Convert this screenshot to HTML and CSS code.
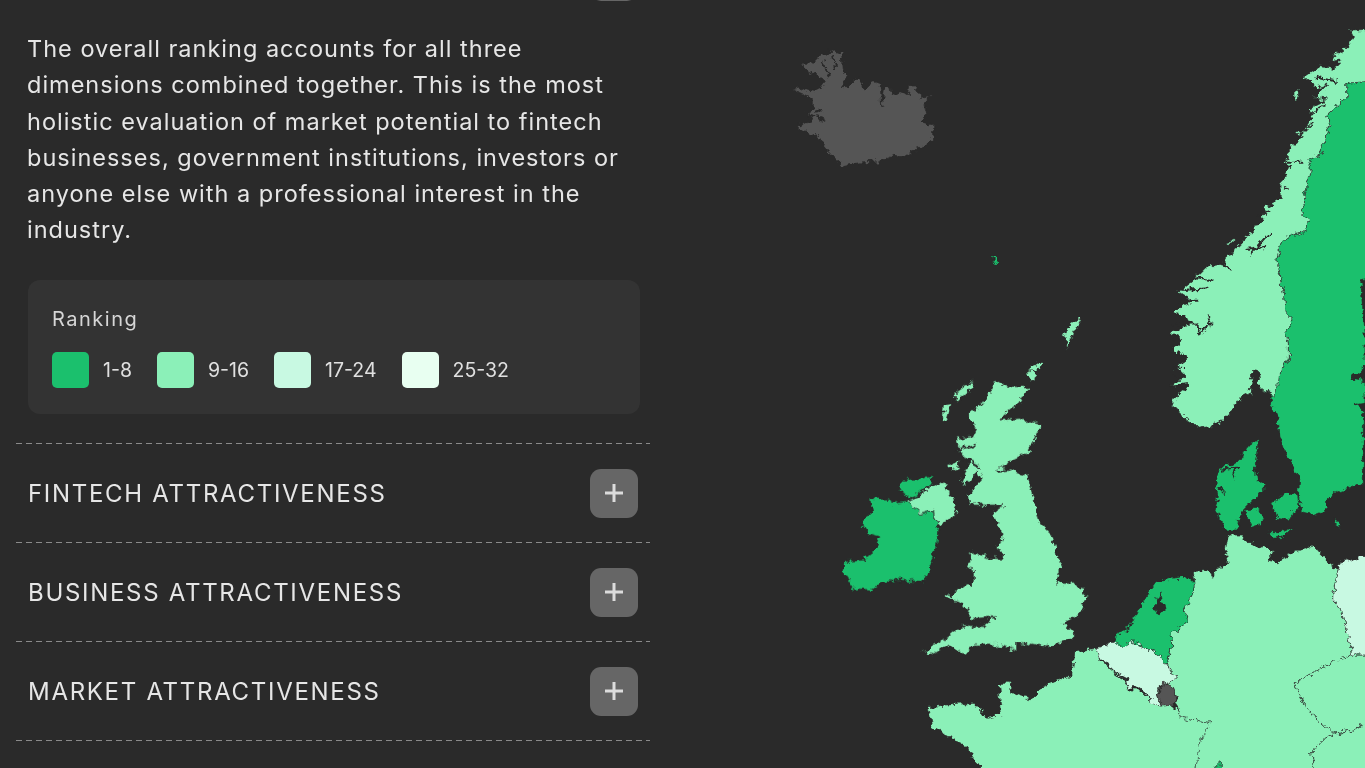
FILE: index.html
```html
<!DOCTYPE html>
<html lang="en">
<head>
<meta charset="utf-8">
<title>Fintech market ranking</title>
<link rel="stylesheet" href="styles.css">
</head>
<body>
<main class="page">
  <aside class="panel">
    <div class="clipped-row"><button class="toggle" type="button" aria-label="Collapse"></button></div>
    <p class="intro">The overall ranking accounts for all three dimensions combined together. This is the most holistic evaluation of market potential to fintech businesses, government institutions, investors or anyone else with a professional interest in the industry.</p>
    <div class="legend">
      <div class="legend-title">Ranking</div>
      <ul class="legend-items">
        <li class="legend-item"><span class="swatch rank-1"></span>1-8</li>
        <li class="legend-item"><span class="swatch rank-2"></span>9-16</li>
        <li class="legend-item"><span class="swatch rank-3"></span>17-24</li>
        <li class="legend-item"><span class="swatch rank-4"></span>25-32</li>
      </ul>
    </div>
    <div class="accordion">
      <div class="acc-row"><h2 class="acc-title">FINTECH ATTRACTIVENESS</h2><button class="toggle" type="button" aria-label="Expand"><svg class="plus" viewBox="0 0 20 20"><path d="M10 1v18M1 10h18"/></svg></button></div>
      <div class="acc-row"><h2 class="acc-title">BUSINESS ATTRACTIVENESS</h2><button class="toggle" type="button" aria-label="Expand"><svg class="plus" viewBox="0 0 20 20"><path d="M10 1v18M1 10h18"/></svg></button></div>
      <div class="acc-row"><h2 class="acc-title">MARKET ATTRACTIVENESS</h2><button class="toggle" type="button" aria-label="Expand"><svg class="plus" viewBox="0 0 20 20"><path d="M10 1v18M1 10h18"/></svg></button></div>
    </div>
  </aside>
  <svg class="map" viewBox="650 0 715 768" aria-label="Map of Europe">
    <defs>
      <filter id="coast" x="-5%" y="-5%" width="110%" height="110%" color-interpolation-filters="sRGB">
        <feTurbulence type="fractalNoise" baseFrequency="0.16" numOctaves="3" seed="4" result="n"/>
        <feDisplacementMap in="SourceGraphic" in2="n" scale="9" xChannelSelector="R" yChannelSelector="G"/>
        <feGaussianBlur stdDeviation="0.6"/>
      </filter>
    </defs>
    <g filter="url(#coast)">
      <g transform="translate(780 30) scale(.33333)">
        <path class="c none" d="M65 100L100 100L125 75L155 60L185 72L190 120L200 145L180 170L205 170L235 140L250 180L280 155L300 160L305 230L315 170L330 170L335 200L360 185L385 195L390 165L410 165L420 205L455 200L430 215L440 250L425 275L458 285L458 320L440 345L410 355L365 385L340 375L290 395L225 400L190 408L165 385L135 350L120 325L50 290L100 265L80 250L100 235L100 205L40 180L55 175L105 185L125 175L140 155L110 135L80 125Z"/>
        <path class="fjord" d="M125 95L150 135M160 80L165 120M85 255L135 270M100 245L130 240"/>
        <path class="c r1" d="M635 680L645 682L655 700L648 708L640 695Z"/>
        <path class="c r2" d="M895 865L905 868L885 900L875 925L862 958L857 930L850 915L870 885Z"/>
        <path class="c r2" d="M740 1020L765 998L790 1002L770 1020Z"/>
      </g>
      <g transform="translate(1150 20) scale(.33333)">
        <path class="c r1" d="M590 190L645 185L670 185L670 770L632 780L636 840L645 930L645 1040L600 1073L645 1082L645 1150L615 1153L640 1170L640 1390L560 1415L530 1440L530 1470L490 1485L455 1475L445 1430L450 1370L410 1310L390 1250L385 1200L360 1140L385 1065L415 1020L415 970L405 935L430 900L405 875L400 820L385 750L380 720L395 660L470 630L475 600L455 575L480 450L480 420L510 405L540 320L530 285L590 230Z"/>
        <path class="c r2" d="M670 28L600 30L610 50L590 80L560 100L545 125L570 120L555 145L510 140L465 170L490 190L500 205L530 195L495 235L530 240L480 265L490 290L470 320L440 345L460 350L415 385L415 410L405 430L420 440L400 480L385 515L400 530L350 560L340 590L300 640L250 690L225 730L170 740L130 780L85 815L130 845L65 875L130 905L60 940L100 960L65 990L115 1015L75 1040L105 1070L60 1100L120 1095L70 1135L65 1155L100 1190L125 1205L145 1225L200 1215L240 1175L270 1135L300 1120L305 1055L325 1050L330 1105L355 1115L375 1135L385 1065L415 1020L415 970L405 935L430 900L405 875L400 820L385 750L380 720L395 660L470 630L475 600L455 575L480 450L480 420L510 405L540 320L530 285L590 230L590 190L645 185L670 185Z"/>
        <path class="fjord" d="M130 775L190 780M100 810L175 805M85 845L145 845M60 885L100 885M65 915L135 910L150 940L185 915L175 885M60 960L90 955M65 990L110 1015M70 1040L105 1045M70 1070L95 1080M60 1100L120 1095M300 705L360 640M290 690L345 680M330 590L360 570M400 500L415 510M405 425L460 425M450 345L490 310M490 275L530 255M500 170L560 185M225 730L240 755"/>
        <path class="c r2" d="M432 215L447 212L442 232L432 235Z"/>
        <path class="c r2" d="M228 665L250 658L248 668L230 670Z"/>
        <path class="c r1" d="M325 1260L290 1280L275 1320L215 1340L200 1360L195 1390L205 1430L195 1470L225 1530L265 1530L270 1480L310 1440L345 1400L320 1380L315 1340Z"/>
        <path class="fjord" d="M215 1350L260 1340L250 1375M205 1400L225 1420"/>
        <path class="c r1" d="M285 1470L320 1465L345 1500L320 1520L295 1505Z"/>
        <path class="c r1" d="M365 1450L410 1415L440 1425L445 1460L415 1500L380 1495Z"/>
        <path class="c r1" d="M355 1535L395 1535L430 1520L400 1550L370 1555Z"/>
        <path class="c r1" d="M555 1500L575 1510L575 1522L560 1520Z"/>
      </g>
      <g transform="translate(830 370) scale(.33333)">
        <path class="c r2" d="M495 35L540 50L595 50L570 95L520 135L510 150L570 145L635 165L620 200L590 250L545 270L525 295L590 315L610 380L625 455L670 500L680 555L695 590L680 640L740 640L770 680L745 735L700 760L730 790L730 810L650 830L560 815L560 845L500 825L430 825L405 855L350 825L310 855L280 845L340 810L395 765L460 770L495 740L430 745L395 700L345 680L400 655L430 635L430 600L405 590L430 570L420 545L470 560L520 565L505 530L520 490L495 450L490 425L525 405L440 405L420 405L415 375L455 330L440 300L420 335L395 340L420 270L385 245L380 205L430 200L440 180L415 130L440 120L470 80Z"/>
        <path class="fjord" d="M380 240L440 225M410 270L450 290M500 300L545 295"/>
        <path class="c r2" d="M375 70L430 30L425 55L380 95Z"/>
        <path class="c r2" d="M340 105L365 100L350 150L338 150Z"/>
        <path class="c r2" d="M360 285L395 270L380 300L365 305Z"/>
        <path class="c r2" d="M590 2L612 0L620 25L600 35Z"/>
        <path class="c r1" d="M120 385L160 385L190 400L230 395L270 430L300 420L325 465L320 520L300 590L280 635L200 630L150 645L125 660L70 655L40 610L45 575L100 570L135 540L150 500L115 490L95 455L125 430Z"/>
        <path class="c r1" d="M205 355L230 330L305 320L300 345L265 370L240 385Z"/>
        <path class="c r2" d="M230 395L270 375L310 340L350 345L365 385L380 420L365 445L325 465L300 420L270 430Z"/>
      </g>
      <g transform="translate(900 640) scale(.33333)">
        <path class="c r2" d="M525 35L590 25L600 60L640 95L680 125L685 150L720 150L750 180L780 195L815 195L850 235L935 250L905 310L885 400L250 400L200 320L100 260L85 200L140 195L220 190L260 235L305 225L295 130L330 130L335 160L395 180L430 140L515 105Z"/>
      </g>
      <g transform="translate(1060 540) scale(.33333)">
        <path class="c r2" d="M505 -15L495 40L505 70L470 85L460 115L445 90L400 95L405 130L395 170L370 210L385 240L360 265L330 280L335 315L320 375L345 410L325 430L355 480L350 510L365 535L450 550L420 600L405 700L770 700L755 640L790 600L820 580L760 530L730 490L700 430L730 415L830 360L875 345L870 300L850 240L845 210L815 175L830 110L835 90L800 60L790 50L760 15L730 25L650 65L620 60L640 30L560 5L545 -15Z"/>
        <path class="c r2" d="M700 430L730 415L830 360L875 345L930 345L930 540L880 570L820 580L760 530L730 490Z"/>
        <path class="c r2" d="M770 700L755 640L790 600L820 580L880 570L930 540L930 700Z"/>
        <path class="c r3" d="M930 40L840 70L835 90L830 110L815 175L845 210L850 240L870 300L875 345L930 345Z"/>
        <path class="c r3" d="M108 325L160 305L215 305L255 320L300 345L320 375L345 410L325 430L300 440L295 465L305 495L280 490L240 440L205 445L200 415L170 400L135 365L115 350Z"/>
        <path class="c none" d="M310 430L330 435L352 475L340 495L305 498L295 465Z"/>
        <path class="c r1" d="M160 305L170 285L210 260L260 165L290 125L385 110L405 130L395 170L370 210L385 240L360 265L330 280L335 315L320 375L300 345L255 320L215 305L190 320ZM275 210L300 220L320 195L305 190L300 155Z"/>
        <path class="c r1" d="M455 700L475 668L495 700Z"/>
      </g>
    </g>
  </svg>
</main>
</body>
</html>
```

FILE: styles.css
```css
* { box-sizing: border-box; }
html, body { margin: 0; height: 100%; }
body {
  background: #2a2a2a;
  color: #e8e8e8;
  font-family: Inter, "Open Sans", sans-serif;
  overflow: hidden;
}
.page { display: flex; height: 768px; overflow: hidden; }
.panel { flex: 0 0 634px; margin-left: 16px; filter: blur(0.35px); }
.clipped-row { display: flex; justify-content: flex-end; padding-right: 12px; height: 1px; align-items: flex-end; }
.intro {
  margin: 30px 0 31px;
  padding: 0 15px 0 11px;
  font-size: 23.5px;
  letter-spacing: 1px;
  line-height: 36.3px;
  color: #e6e6e6;
}
.legend {
  margin: 0 10px 29px 12px;
  padding: 27px 24px 26px;
  height: 134px;
  background: #333;
  border-radius: 12px;
}
.legend-title { font-size: 20px; letter-spacing: 1.5px; line-height: 24px; color: #d6d6d6; }
.legend-items { display: flex; gap: 25px; list-style: none; margin: 21px 0 0; padding: 0; }
.legend-item { display: flex; align-items: center; gap: 14px; font-size: 19.5px; color: #e0e0e0; }
.swatch { width: 37px; height: 36px; border-radius: 5px; }
.rank-1 { background: #1bc06d; }
.rank-2 { background: #8bf0b8; }
.rank-3 { background: #c8f9e2; }
.rank-4 { background: #e8fff1; }
.accordion {
  padding-top: 1px;
  background: repeating-linear-gradient(90deg, #8a8a8a 0 6px, transparent 6px 10px) top / 100% 1px no-repeat;
}
.acc-row {
  display: flex;
  align-items: center;
  justify-content: space-between;
  height: 99px;
  padding: 0 12px;
  background: repeating-linear-gradient(90deg, #8a8a8a 0 6px, transparent 6px 10px) bottom / 100% 1px no-repeat;
}
.acc-title { margin: 0; font-size: 24px; font-weight: 400; letter-spacing: 1.7px; color: #e6e6e6; }
.toggle {
  flex: none;
  display: flex;
  align-items: center;
  justify-content: center;
  width: 48px;
  height: 49px;
  padding: 0;
  border: 0;
  border-radius: 11px;
  background: #666;
}
.plus { width: 20px; height: 20px; fill: none; stroke: #dcdcdc; stroke-width: 3; }
.map { flex: 1 1 auto; display: block; height: 768px; }
.c { stroke: #2a2a2a; stroke-width: 2; stroke-linejoin: round; }
.none { fill: #555; }
.r1 { fill: #1bc06d; }
.r2 { fill: #8bf0b8; }
.r3 { fill: #c8f9e2; }
.fjord { fill: none; stroke: #2a2a2a; stroke-width: 6; }
```
